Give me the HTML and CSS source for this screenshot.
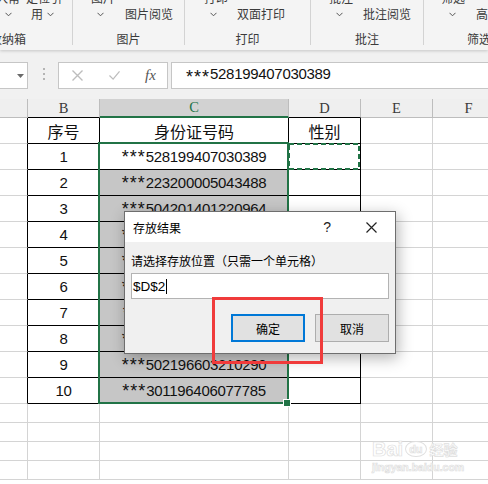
FILE: index.html
```html
<!DOCTYPE html>
<html lang="zh-CN">
<head>
<meta charset="utf-8">
<title>存放结果</title>
<link rel="stylesheet" href="styles.css">
</head>
<body>
<div class="ribbon">
  <div class="grp g1">
    <div class="r0"><span class="ml-4">入常</span><span class="ml6">定位引</span></div>
    <div class="r1"><svg class="chev ml5" viewBox="0 0 7 5"><polyline points="0.5,0.8 3.5,3.8 6.5,0.8"/></svg><span class="ml19">用</span><svg class="chev ml4" viewBox="0 0 7 5"><polyline points="0.5,0.8 3.5,3.8 6.5,0.8"/></svg></div>
    <div class="r2 start"><span class="ml-10">收纳箱</span></div>
  </div>
  <div class="grp g2">
    <div class="r0"><span class="ml18">图片</span></div>
    <div class="r1"><svg class="chev ml24" viewBox="0 0 7 5"><polyline points="0.5,0.8 3.5,3.8 6.5,0.8"/></svg><span class="ml21">图片阅览</span></div>
    <div class="r2">图片</div>
  </div>
  <div class="grp g3">
    <div class="r0"><span class="ml19">打印</span></div>
    <div class="r1"><svg class="chev ml25" viewBox="0 0 7 5"><polyline points="0.5,0.8 3.5,3.8 6.5,0.8"/></svg><span class="ml20">双面打印</span></div>
    <div class="r2">打印</div>
  </div>
  <div class="grp g4">
    <div class="r0"><span class="ml18">批注</span></div>
    <div class="r1"><svg class="chev ml25" viewBox="0 0 7 5"><polyline points="0.5,0.8 3.5,3.8 6.5,0.8"/></svg><span class="ml20">批注阅览</span></div>
    <div class="r2">批注</div>
  </div>
  <div class="grp g5">
    <div class="r0"><span class="ml17">筛选</span></div>
    <div class="r1"><svg class="chev ml25" viewBox="0 0 7 5"><polyline points="0.5,0.8 3.5,3.8 6.5,0.8"/></svg><span class="ml20">高</span></div>
    <div class="r2 start"><span class="ml43">筛选</span></div>
  </div>
</div>

<div class="fbar">
  <div class="namebox"><svg class="tri" viewBox="0 0 7 4"><polygon points="0,0 7,0 3.5,4"/></svg></div>
  <div class="dots"><i></i><i></i><i></i></div>
  <div class="fxbox">
    <svg class="ico ml13" viewBox="0 0 11 11"><path d="M0.5 0.5 L10.5 10.5 M10.5 0.5 L0.5 10.5"/></svg>
    <svg class="ico ml26" viewBox="0 0 12 11"><path d="M0.5 5.5 L4.5 9.5 L11.5 1"/></svg>
    <span class="fx ml25">fx</span>
  </div>
  <div class="finput"><span class="num"><span class="ast">***</span>528199407030389</span></div>
</div>

<div class="colhdr">
  <div class="h wa"></div>
  <div class="h wb tb">B</div>
  <div class="h wc sel">C</div>
  <div class="h wd tb">D</div>
  <div class="h we">E</div>
  <div class="h wf">F</div>
</div>

<div class="sheet">
  <div class="row"><div class="c wa ae"></div><div class="c t wb zh">序号</div><div class="c t wc zh">身份证号码</div><div class="c t wd zh">性别</div><div class="c we"></div><div class="c wf"></div></div>
  <div class="row"><div class="c wa ae"></div><div class="c t wb num">1</div><div class="c t wc num"><span class="ast">***</span>528199407030389</div><div class="c t wd"></div><div class="c we"></div><div class="c wf"></div></div>
  <div class="row"><div class="c wa ae"></div><div class="c t wb num">2</div><div class="c t wc g num"><span class="ast">***</span>223200005043488</div><div class="c t wd"></div><div class="c we"></div><div class="c wf"></div></div>
  <div class="row"><div class="c wa ae"></div><div class="c t wb num">3</div><div class="c t wc g num"><span class="ast">***</span>504201401220964</div><div class="c t wd"></div><div class="c we"></div><div class="c wf"></div></div>
  <div class="row"><div class="c wa ae"></div><div class="c t wb num">4</div><div class="c t wc g num"><span class="ast">***</span>402199512150321</div><div class="c t wd"></div><div class="c we"></div><div class="c wf"></div></div>
  <div class="row"><div class="c wa ae"></div><div class="c t wb num">5</div><div class="c t wc g num"><span class="ast">***</span>310198803126547</div><div class="c t wd"></div><div class="c we"></div><div class="c wf"></div></div>
  <div class="row"><div class="c wa ae"></div><div class="c t wb num">6</div><div class="c t wc g num"><span class="ast">***</span>105199107084412</div><div class="c t wd"></div><div class="c we"></div><div class="c wf"></div></div>
  <div class="row"><div class="c wa ae"></div><div class="c t wb num">7</div><div class="c t wc g num"><span class="ast">***</span>201197911233018</div><div class="c t wd"></div><div class="c we"></div><div class="c wf"></div></div>
  <div class="row"><div class="c wa ae"></div><div class="c t wb num">8</div><div class="c t wc g num"><span class="ast">***</span>306198206190725</div><div class="c t wd"></div><div class="c we"></div><div class="c wf"></div></div>
  <div class="row"><div class="c wa ae"></div><div class="c t wb num">9</div><div class="c t wc g num"><span class="ast">***</span>502196603210290</div><div class="c t wd"></div><div class="c we"></div><div class="c wf"></div></div>
  <div class="row"><div class="c wa ae"></div><div class="c t wb num">10</div><div class="c t wc g num"><span class="ast">***</span>301196406077785</div><div class="c t wd"></div><div class="c we"></div><div class="c wf"></div></div>
  <div class="row s"><div class="c wa"></div><div class="c wb"></div><div class="c wc"></div><div class="c wd"></div><div class="c we"></div><div class="c wf"></div></div>
  <div class="row s"><div class="c wa"></div><div class="c wb"></div><div class="c wc"></div><div class="c wd"></div><div class="c we"></div><div class="c wf"></div></div>
  <div class="row s"><div class="c wa"></div><div class="c wb"></div><div class="c wc"></div><div class="c wd"></div><div class="c we"></div><div class="c wf"></div></div>
  <div class="row s"><div class="c wa"></div><div class="c wb"></div><div class="c wc"></div><div class="c wd"></div><div class="c we"></div><div class="c wf"></div></div>
</div>

<div class="selbox"></div>
<div class="handle"></div>
<svg class="marq" viewBox="0 0 72 27"><rect x="1" y="1" width="70" height="25"/></svg>

<div class="wm">
  <div class="wm-top"><span class="wm-bai">Bai</span><span class="wm-du">du</span><span class="wm-jy">经验</span></div>
  <div class="wm-url">jingyan.baidu.com</div>
</div>

<div class="dlg">
  <div class="dlg-title">
    <span class="dlg-name">存放结果</span>
    <span class="help">?</span>
    <svg class="close" viewBox="0 0 11 11"><path d="M0.5 0.5 L10.5 10.5 M10.5 0.5 L0.5 10.5"/></svg>
  </div>
  <div class="dlg-body">
    <div class="lbl">请选择存放位置（只需一个单元格）</div>
    <div class="inp"><span class="inp-text">$D$2</span><span class="caret"></span></div>
    <div class="btns">
      <div class="btn primary">确定</div>
      <div class="btn">取消</div>
    </div>
  </div>
</div>

<div class="mark"></div>
</body>
</html>
```

FILE: styles.css
```css
* { box-sizing: border-box; }
html, body { margin: 0; padding: 0; }
body {
  width: 488px;
  height: 484px;
  overflow: hidden;
  position: relative;
  background: #fff;
  font-family: "Noto Sans CJK SC", sans-serif;
  color: #000;
}

/* ribbon */
.ribbon {
  height: 50px;
  background: #f4f4f4;
  display: flex;
  align-items: flex-start;
  overflow: hidden;
  position: relative;
  z-index: 2;
  box-shadow: 0 1px 3px rgba(0,0,0,.18);
  font-size: 12px;
  color: #3b3b3b;
}
.grp { height: 45px; border-right: 1px solid #d3d3d3; flex: none; }
.g1 { width: 73px; }
.g2 { width: 112px; }
.g3 { width: 126px; }
.g4 { width: 113px; }
.g5 { width: 80px; border-right: 0; }
.r0, .r1, .r2 {
  height: 16px;
  line-height: 16px;
  display: flex;
  align-items: center;
  white-space: nowrap;
}
.r0 { margin-top: -10px; }
.r2 { margin-top: 9px; justify-content: center; }
.r2.start { justify-content: flex-start; }
.chev { width: 7px; height: 5px; flex: none; }
.chev polyline { fill: none; stroke: #555; stroke-width: 1; }
.ml-10 { margin-left: -10px; }
.ml-4 { margin-left: -4px; }
.ml4 { margin-left: 4px; }
.ml5 { margin-left: 5px; }
.ml6 { margin-left: 6px; }
.ml13 { margin-left: 13px; }
.ml17 { margin-left: 17px; }
.ml18 { margin-left: 18px; }
.ml19 { margin-left: 19px; }
.ml20 { margin-left: 20px; }
.ml21 { margin-left: 21px; }
.ml24 { margin-left: 24px; }
.ml25 { margin-left: 25px; }
.ml26 { margin-left: 26px; }
.ml43 { margin-left: 43px; }

/* formula bar */
.fbar {
  height: 49px;
  background: #f1f1f1;
  display: flex;
  align-items: flex-start;
  padding-top: 12px;
}
.namebox {
  width: 29px;
  height: 27px;
  margin-left: -1px;
  background: #fff;
  border: 1px solid #c6c6c6;
  display: flex;
  align-items: center;
  justify-content: flex-end;
  padding-right: 3px;
  flex: none;
}
.tri { width: 7px; height: 4px; }
.tri polygon { fill: #6a6a6a; }
.dots {
  margin-left: 15px;
  margin-top: 6px;
  display: flex;
  flex-direction: column;
  gap: 3px;
  flex: none;
}
.dots i { display: block; width: 2px; height: 2px; background: #b4b4b4; }
.fxbox {
  margin-left: 13px;
  width: 110px;
  height: 27px;
  background: #fff;
  border: 1px solid #c6c6c6;
  display: flex;
  align-items: center;
  flex: none;
}
.ico { width: 11px; height: 11px; flex: none; }
.ico path { fill: none; stroke: #bdbdbd; stroke-width: 1.4; }
.fx {
  font-family: "Liberation Serif", serif;
  font-style: italic;
  font-size: 15px;
  color: #555;
  line-height: 1;
}
.finput {
  margin-left: 3px;
  margin-right: -5px;
  flex: 1;
  height: 27px;
  background: #fff;
  border: 1px solid #c6c6c6;
  display: flex;
  align-items: center;
  padding-left: 14px;
}

/* headers */
.colhdr { display: flex; height: 19px; }
.h {
  height: 19px;
  border-right: 1px solid #bdbdbd;
  border-bottom: 1px solid #bdbdbd;
  background: #efefef;
  display: flex;
  align-items: center;
  justify-content: center;
  font-family: "Liberation Serif", serif;
  font-size: 14.5px;
  color: #3a3a3a;
  flex: none;
}
.h.tb { border-bottom-color: #000; }
.h.sel {
  background: #d2d2d2;
  color: #217346;
  border-bottom: 2px solid #217346;
}
.wa { width: 28px; }
.wb { width: 72px; }
.wc { width: 189px; }
.wd, .we, .wf { width: 72px; }

/* cells */
.row { display: flex; height: 26px; }
.row.s { height: 19px; }
.c {
  height: 100%;
  border-right: 1px solid #d4d4d4;
  border-bottom: 1px solid #d4d4d4;
  flex: none;
  display: flex;
  align-items: center;
  justify-content: center;
  white-space: nowrap;
}
.c.t { border-color: #000; }
.c.ae { border-right-color: #000; }
.c.g { background: #c6c6c6; }
.num {
  font-family: "Liberation Sans", sans-serif;
  font-size: 15px;
  letter-spacing: -0.3px;
  color: #111;
}
.ast {
  font-size: 18px;
  letter-spacing: 1px;
  vertical-align: -4px;
  line-height: 1;
}
.zh { font-size: 16px; color: #111; }

/* overlays */
.selbox {
  position: absolute;
  left: 98px;
  top: 142px;
  width: 191px;
  height: 262px;
  border: 2px solid #217346;
}
.handle {
  position: absolute;
  left: 283px;
  top: 399px;
  width: 8px;
  height: 8px;
  background: #217346;
  border: 1px solid #fff;
}
.marq {
  position: absolute;
  left: 288px;
  top: 143px;
  width: 72px;
  height: 27px;
}
.marq rect { fill: none; stroke: #217346; stroke-width: 2; stroke-dasharray: 5 3; }

.wm {
  position: absolute;
  left: 372px;
  top: 438px;
  color: #fff;
  -webkit-text-stroke: 0.7px #dedede;
  font-family: "Liberation Sans", sans-serif;
  font-weight: bold;
}
.wm-top { display: flex; align-items: center; height: 22px; }
.wm-bai { font-size: 20px; }
.wm-du {
  font-size: 11px;
  margin: 0 3px 0 2px;
  border: 1px solid #e0e0e0;
  border-radius: 50%;
  padding: 1px 3px;
}
.wm-jy { font-size: 14px; font-family: "Noto Sans CJK SC", sans-serif; }
.wm-url { font-size: 10.5px; margin-top: 1px; }

/* dialog */
.dlg {
  position: absolute;
  left: 124px;
  top: 211px;
  width: 272px;
  border: 1px solid #6e6e6e;
  background: #f0f0f0;
  box-shadow: 2px 4px 14px rgba(0,0,0,.3);
  padding-bottom: 11px;
}
.dlg-title {
  height: 30px;
  background: #fff;
  display: flex;
  align-items: center;
  padding-left: 8px;
  font-size: 12px;
}
.dlg-name { flex: 1; }
.help {
  font-family: "Liberation Sans", sans-serif;
  font-size: 14px;
  color: #222;
}
.close { width: 11px; height: 11px; margin-left: 35px; margin-right: 18px; flex: none; }
.close path { fill: none; stroke: #222; stroke-width: 1.2; }
.dlg-body { padding: 0 6px; }
.lbl { margin-top: 10px; font-size: 12px; line-height: 18px; }
.inp {
  margin-top: 3px;
  width: 258px;
  height: 26px;
  background: #fff;
  border: 1px solid #b3b3b3;
  display: flex;
  align-items: center;
  padding-left: 1px;
}
.inp-text { font-family: "Liberation Sans", sans-serif; font-size: 13.5px; }
.caret { width: 1px; height: 15px; background: #000; margin-left: 1px; }
.btns {
  margin-top: 15px;
  display: flex;
  justify-content: flex-end;
  gap: 10px;
}
.btn {
  width: 74px;
  height: 28px;
  background: #e1e1e1;
  border: 1px solid #adadad;
  display: flex;
  align-items: center;
  justify-content: center;
  font-size: 12px;
}
.btn.primary { border: 2px solid #0078d7; }

.mark {
  position: absolute;
  left: 212px;
  top: 297px;
  width: 111px;
  height: 67px;
  border: 3px solid #f03b3b;
}
```
